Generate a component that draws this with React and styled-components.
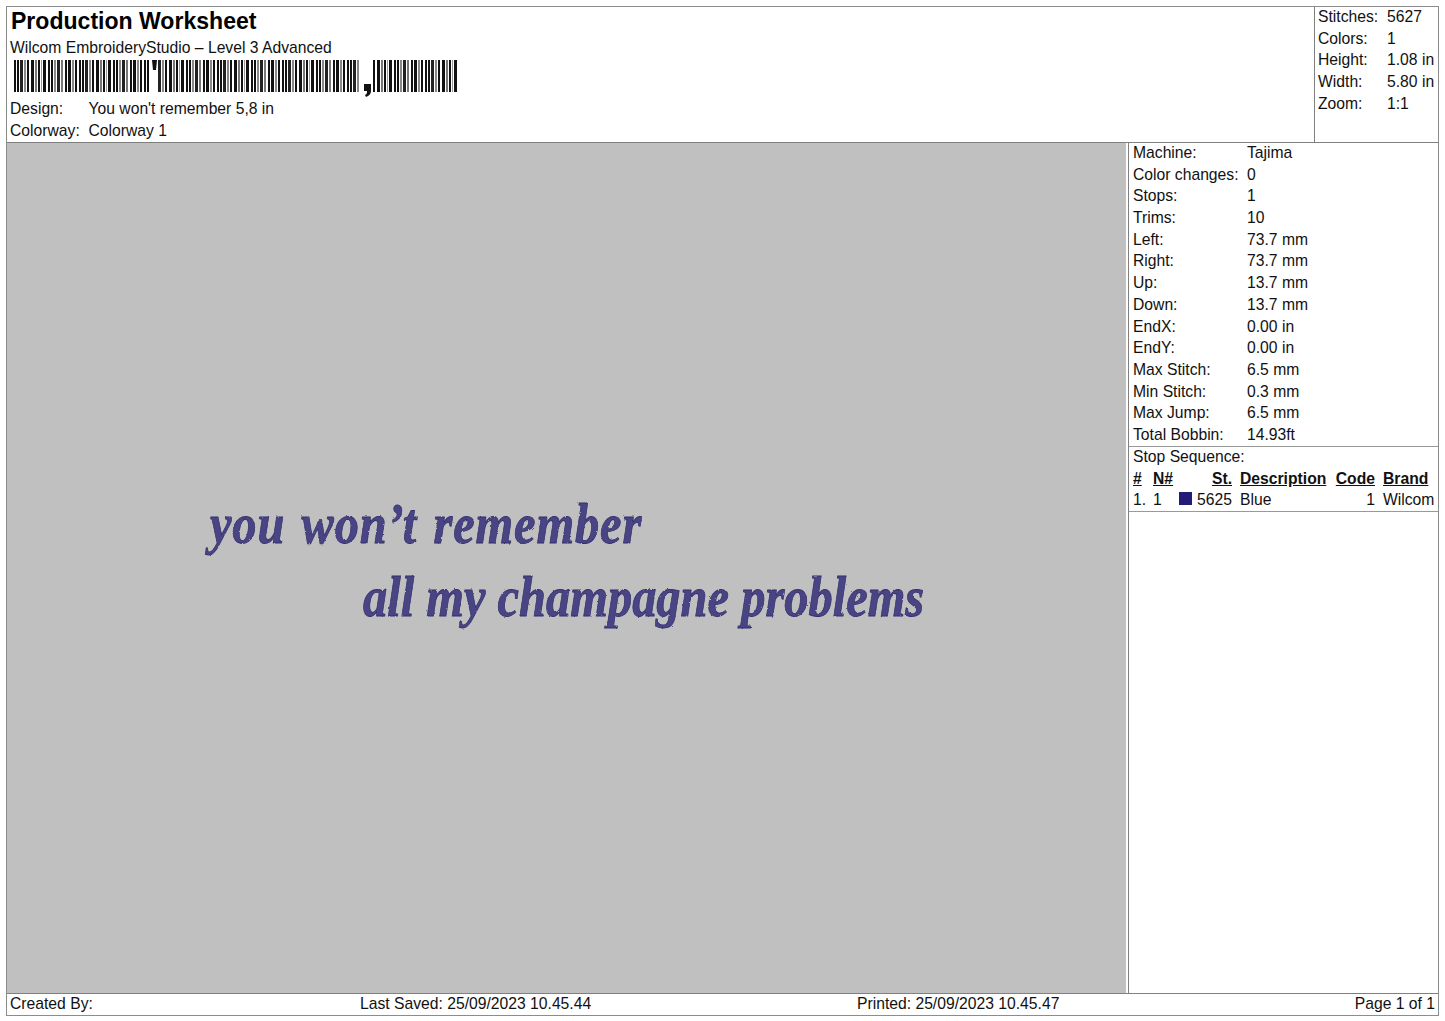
import styled, { createGlobalStyle } from "styled-components"

const GlobalStyle = createGlobalStyle`
  html, body {
    margin: 0;
    padding: 0;
    background: #fff;
    color: #111;
    font-family: "Liberation Sans", Arial, sans-serif;
    font-size: 15.7px;
  }
`

const machineInfo = [
  ["Machine:", "Tajima"],
  ["Color changes:", "0"],
  ["Stops:", "1"],
  ["Trims:", "10"],
  ["Left:", "73.7 mm"],
  ["Right:", "73.7 mm"],
  ["Up:", "13.7 mm"],
  ["Down:", "13.7 mm"],
  ["EndX:", "0.00 in"],
  ["EndY:", "0.00 in"],
  ["Max Stitch:", "6.5 mm"],
  ["Min Stitch:", "0.3 mm"],
  ["Max Jump:", "6.5 mm"],
  ["Total Bobbin:", "14.93ft"],
]

const stats = [
  ["Stitches:", "5627"],
  ["Colors:", "1"],
  ["Height:", "1.08 in"],
  ["Width:", "5.80 in"],
  ["Zoom:", "1:1"],
]

// bar, gap pairs of one run of the code, grey ones are the thin blurred bars
const barPattern = [
  [2, 1, "#111"], [2, 1, "#111"], [3, 1, "#222"], [2, 1, "#888"], [2, 2, "#111"],
  [3, 1, "#111"], [2, 1, "#777"], [2, 1, "#111"], [1, 1, "#999"], [3, 2, "#111"],
  [2, 1, "#111"], [2, 1, "#111"], [2, 1, "#888"], [3, 1, "#222"], [2, 2, "#777"],
  [2, 1, "#111"], [3, 1, "#111"], [2, 1, "#888"], [2, 2, "#111"],
]

// the code leaves room for the two characters that are not bars
const barRuns = [[0, 135], [144, 346], [359, 443]]

function buildBars() {
  const bars = []
  let i = 0
  barRuns.forEach(([start, end]) => {
    let x = start
    while (x < end) {
      const [w, gap, fill] = barPattern[i % barPattern.length]
      bars.push({ x, w: Math.min(w, end - x), fill })
      x += w + gap
      i++
    }
  })
  return bars
}

function Barcode() {
  return (
    <BarcodeSvg viewBox="0 0 446 40" width="446" height="40">
      {buildBars().map(b => (
        <rect key={b.x} x={b.x} y="0" width={b.w} height="32" fill={b.fill} />
      ))}
      <path d="M138 0h5l-1 10h-3z" fill="#111" />
      <path d="M350 24h7v7c0 3-2 5-5 6l-1-2c2-1 2-2 2-4h-3z" fill="#111" />
    </BarcodeSvg>
  )
}

function App() {
  return (
    <>
      <GlobalStyle />
      <svg width="0" height="0" style={{ position: "absolute" }} aria-hidden="true">
        <filter id="stitch">
          <feTurbulence type="fractalNoise" baseFrequency="0.35" numOctaves="2" seed="4" />
          <feDisplacementMap in="SourceGraphic" scale="2.2" />
        </filter>
      </svg>
      <Sheet>
        <Header>
          <HeaderMain>
            <Title>Production Worksheet</Title>
            <Product>Wilcom EmbroideryStudio – Level 3 Advanced</Product>
            <Barcode />
            <DesignRow><span>Design:</span><span>You won't remember 5,8 in</span></DesignRow>
            <DesignRow><span>Colorway:</span><span>Colorway 1</span></DesignRow>
          </HeaderMain>
          <Stats>
            {stats.map(([label, value]) => (
              <StatRow key={label}><span>{label}</span><span>{value}</span></StatRow>
            ))}
          </Stats>
        </Header>
        <Body>
          <Canvas>
            <Stitched $left={203} $top={348} $spacing={1} $words={4}>you won’t remember</Stitched>
            <Stitched $left={356} $top={421} $spacing={0} $words={0}>all my champagne problems</Stitched>
          </Canvas>
          <Side>
            <InfoList>
              {machineInfo.map(([label, value]) => (
                <InfoRow key={label}><span>{label}</span><span>{value}</span></InfoRow>
              ))}
            </InfoList>
            <StopSection>
              <StopTitle>Stop Sequence:</StopTitle>
              <StopHead>
                <span>#</span>
                <span>N#</span>
                <span />
                <Right>St.</Right>
                <Description>Description</Description>
                <Right>Code</Right>
                <Brand>Brand</Brand>
              </StopHead>
              <StopRow>
                <span>1.</span>
                <span>1</span>
                <Swatch />
                <Right>5625</Right>
                <Description>Blue</Description>
                <Right>1</Right>
                <Brand>Wilcom</Brand>
              </StopRow>
            </StopSection>
          </Side>
        </Body>
        <Footer>
          <span>Created By:</span>
          <span>Last Saved: 25/09/2023 10.45.44</span>
          <span>Printed: 25/09/2023 10.45.47</span>
          <PageNo>Page 1 of 1</PageNo>
        </Footer>
      </Sheet>
    </>
  )
}

export default App

const Sheet = styled.div`
  box-sizing: border-box;
  margin: 6px 0 0 6px;
  width: 1433px;
  height: 1010px;
  border: 1px solid #8c8c8c;
  display: flex;
  flex-direction: column;
`

const Header = styled.header`
  height: 135px;
  flex: none;
  display: flex;
  justify-content: space-between;
  border-bottom: 1px solid #808080;
`

const HeaderMain = styled.div`
  padding-left: 3px;
`

const Title = styled.h1`
  margin: 0 0 0 1px;
  font-size: 23.05px;
  line-height: 29px;
  font-weight: bold;
  color: #000;
`

const Product = styled.div`
  height: 23px;
  line-height: 23px;
`

const BarcodeSvg = styled.svg`
  display: block;
  margin: 1px 0 -2px 4px;
`

const DesignRow = styled.div`
  display: grid;
  grid-template-columns: 78.5px auto;
  line-height: 21.5px;
`

const Stats = styled.div`
  box-sizing: border-box;
  width: 124px;
  padding-left: 3px;
  border-left: 1px solid #808080;
  display: grid;
  grid-auto-rows: 21.7px;
  align-content: start;
`

const StatRow = styled.div`
  display: grid;
  grid-template-columns: 69px auto;
  line-height: 19.7px;
`

const Body = styled.main`
  flex: 1;
  display: flex;
  min-height: 0;
`

const Canvas = styled.div`
  position: relative;
  flex: 1;
  background: #c0c0c0;
  overflow: hidden;
  border-right: 2px solid #fff;
`

// the sewn lettering sits on the canvas at the place it has in the design
const Stitched = styled.div`
  position: absolute;
  left: ${p => p.$left}px;
  top: ${p => p.$top}px;
  font-family: "Liberation Serif", "Times New Roman", serif;
  font-style: italic;
  font-weight: bold;
  font-size: 57px;
  line-height: 66px;
  letter-spacing: ${p => p.$spacing}px;
  word-spacing: ${p => p.$words}px;
  white-space: nowrap;
  color: #4a4585;
  -webkit-text-stroke: 0.8px #332e6c;
  transform: scaleX(0.85);
  transform-origin: left center;
  filter: url(#stitch);
`

const Side = styled.aside`
  box-sizing: border-box;
  width: 310px;
  flex: none;
  border-left: 1px solid #808080;
`

const InfoList = styled.div`
  box-sizing: border-box;
  padding-left: 4px;
  height: 304px;
  border-bottom: 1px solid #999;
  display: grid;
  grid-auto-rows: 21.7px;
  align-content: start;
`

const InfoRow = styled.div`
  display: grid;
  grid-template-columns: 114px auto;
  line-height: 19.7px;
`

const StopSection = styled.div`
  box-sizing: border-box;
  padding-left: 4px;
  height: 65px;
  border-bottom: 1px solid #999;
`

const StopTitle = styled.div`
  height: 21px;
  line-height: 19px;
`

const stopColumns = `
  display: grid;
  grid-template-columns: 20px 26px 13px 40px 97px 46px auto;
  line-height: 21px;
`

const StopHead = styled.div`
  ${stopColumns}
  font-weight: bold;
  text-decoration: underline;
`

const StopRow = styled.div`
  ${stopColumns}
  align-items: center;
`

const Right = styled.span`
  text-align: right;
`

const Description = styled.span`
  margin-left: 8px;
`

const Brand = styled.span`
  margin-left: 8px;
`

const Swatch = styled.span`
  display: block;
  width: 13px;
  height: 13px;
  margin-bottom: 3px;
  background: #241a78;
`

const Footer = styled.footer`
  flex: none;
  height: 21px;
  display: grid;
  grid-template-columns: 350px 497px 1fr auto;
  align-items: start;
  line-height: 20px;
  padding: 0 3px;
  border-top: 1px solid #808080;
`

const PageNo = styled.span`
  text-align: right;
`
